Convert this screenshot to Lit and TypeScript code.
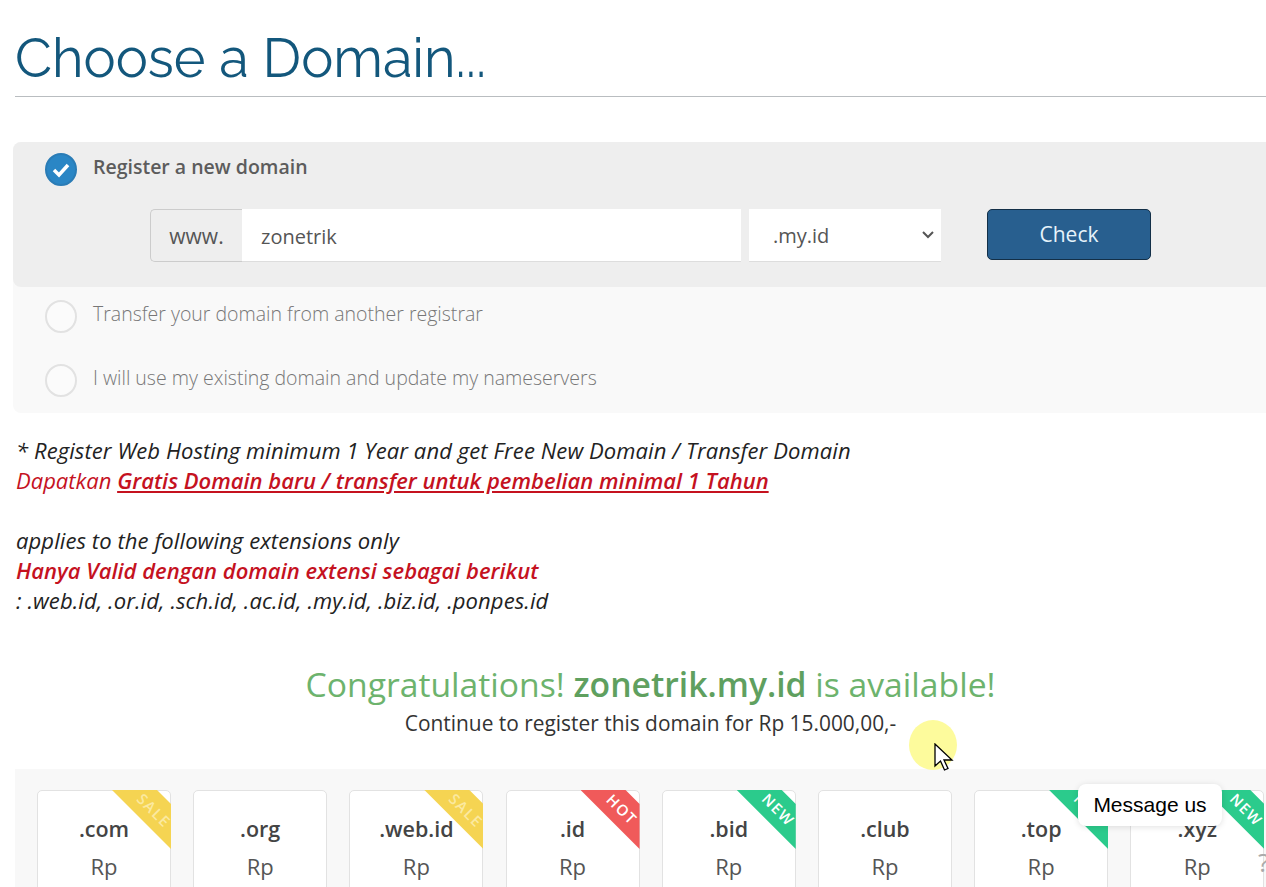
import { LitElement, html, css } from "lit";
import { customElement } from "lit/decorators.js";

type Tld = { name: string; tag?: "sale" | "hot" | "new" };
const TLDS: Tld[] = [
  { name: ".com", tag: "sale" },
  { name: ".org" },
  { name: ".web.id", tag: "sale" },
  { name: ".id", tag: "hot" },
  { name: ".bid", tag: "new" },
  { name: ".club" },
  { name: ".top", tag: "new" },
  { name: ".xyz", tag: "new" },
];

@customElement("app-root")
export class AppRoot extends LitElement {
  static styles = css`
    :host {
      display: block;
      width: 1266px;
      height: 887px;
      overflow: hidden;
      position: relative;
      background: #fff;
      font-family: "Open Sans", sans-serif;
      color: #333;
    }
    .page { padding-left: 15px; }
    h1 {
      margin: 0;
      height: 97px;
      box-sizing: border-box;
      padding-top: 25px;
      border-bottom: 1px solid #b9bdc0;
      font: 400 54px/66px Raleway, "Open Sans", sans-serif;
      color: #13577c;
    }
    .options {
      margin: 45px 0 0 -2px;
      padding-left: 2px;
      height: 271px;
      background: #f9f9f9;
      border-radius: 8px 0 0 8px;
    }
    .sel {
      margin-left: -2px;
      padding-left: 2px;
      height: 145px;
      background: #eee;
      border-radius: 8px 0 0 8px;
      box-sizing: border-box;
      padding-top: 11px;
    }
    .opt { display: flex; align-items: flex-start; padding-left: 30px; gap: 16px; }
    .radio {
      width: 32px; height: 33px; border-radius: 50%;
      box-sizing: border-box; flex: none;
      border: 2px solid #e2e2e2; background: #fbfbfb;
      display: flex; align-items: center; justify-content: center;
    }
    .radio.on { background: #2a86c5; border-color: #2a7cb6; }
    .label { font-size: 19.5px; line-height: 26px; color: #777; font-weight: 300; }
    .sel .label { color: #5c5c5c; font-weight: 600; margin-top: 1px; }
    .form { display: flex; margin-top: 23px; padding-left: 135px; align-items: flex-start; }
    .www {
      width: 92px; height: 53px; box-sizing: border-box;
      background: #eee; border: 1px solid #ccc; border-right: 0;
      border-radius: 5px 0 0 5px;
      font-size: 21px; line-height: 53px; text-align: center; color: #555;
    }
    .input {
      width: 499px; height: 53px; box-sizing: border-box;
      background: #fff; border-bottom: 1px solid #ddd;
      font-size: 20px; line-height: 55px; padding-left: 19px; color: #555;
    }
    .select {
      width: 192px; height: 53px; margin-left: 8px; box-sizing: border-box;
      background: #fff; border-bottom: 1px solid #ddd;
      font-size: 20px; line-height: 55px; padding-left: 24px; color: #555;
      display: flex; justify-content: space-between; align-items: center;
    }
    .select svg { margin-right: 6px; }
    .btn {
      margin-left: 46px; width: 164px; height: 51px; box-sizing: border-box;
      background: #285f8f; border: 1px solid #132f47; border-radius: 5px;
      color: #e6f3fb; font-size: 21px; line-height: 49px; text-align: center;
    }
    .rest { padding-top: 13px; }
    .rest .opt { height: 64px; }
    .rest .label { margin-top: 1px; }
    .note {
      margin-top: 22px; font-style: italic; font-size: 22px; line-height: 30px;
      color: #222; white-space: nowrap; padding-left: 1px; letter-spacing: 0.09px;
    }
    .red { color: #c5121f; letter-spacing: 0; }
    .strong { font-weight: 600; }
    u { font-weight: 600; }
    .blank { height: 30px; }
    .congr { margin-top: 47px; text-align: center; padding-left: 20px; }
    .congr h2 {
      margin: 0; font-weight: 400; font-size: 33.7px; line-height: 44px; color: #6db36d;
    }
    .congr h2 b { font-weight: 600; color: #5fa05f; }
    .congr p { margin: 0; font-size: 20.9px; line-height: 34px; color: #333; }
    .tlds {
      margin-top: 29px; height: 200px; background: #f8f8f8;
      display: flex; gap: 22.2px; padding: 21px 0 0 22px; overflow: hidden;
    }
    .card {
      position: relative; flex: none; width: 134px; height: 160px;
      box-sizing: border-box; background: #fff;
      border: 1px solid #e2e2e2; border-radius: 5px;
      text-align: center;
    }
    .card .n { margin-top: 22px; font-size: 21.5px; font-weight: 550; line-height: 32px; color: #444; }
    .card .p { margin-top: 6px; font-size: 22px; line-height: 30px; color: #555; }
    .rib {
      position: absolute; top: -1px; right: -1px; width: 59px; height: 59px;
      clip-path: polygon(0 0, 45px 0, 100% 14px, 100% 100%);
    }
    .rib span {
      position: absolute; left: 22px; top: 5px; width: 38px; height: 29px;
      transform: rotate(45deg); text-align: center;
      font-size: 15px; line-height: 29px; letter-spacing: 1.500px;
      color: #fff; font-weight: 600; white-space: nowrap;
    }
    .sale { background: #f5d452; }
    .sale span { color: #fbe9a0; }
    .hot { background: #f05a5a; }
    .new { background: #2bcb8c; }
    .halo {
      position: absolute; left: 909px; top: 720px; width: 48px; height: 50px;
      border-radius: 50%; background: #fdfb9c;
    }
    .cursor { position: absolute; left: 934px; top: 743px; }
    .msg {
      position: absolute; left: 1078px; top: 784px; width: 144px; height: 42px;
      background: #fff; border-radius: 8px;
      box-shadow: 0 1px 6px rgba(0,0,0,.12);
      font: 400 21px/42px "Liberation Sans", sans-serif; color: #000; text-align: center;
    }
    .q {
      position: absolute; left: 1258px; top: 846px;
      font: 400 26px/32px "Open Sans", sans-serif; color: #aaa;
    }
  `;

  render() {
    return html`
      <div class="page">
        <h1>Choose a Domain...</h1>
        <div class="options">
          <div class="sel">
            <div class="opt">
              <div class="radio on">
                <svg width="22" height="18" viewBox="0 0 22 18"><path d="M4 9l5 5 9-10" fill="none" stroke="#fff" stroke-width="3.500"/></svg>
              </div>
              <div class="label">Register a new domain</div>
            </div>
            <div class="form">
              <div class="www">www.</div>
              <div class="input">zonetrik</div>
              <div class="select">.my.id
                <svg width="14" height="10" viewBox="0 0 14 10"><path d="M2 2l5 5 5-5" fill="none" stroke="#555" stroke-width="2"/></svg>
              </div>
              <div class="btn">Check</div>
            </div>
          </div>
          <div class="rest">
            <div class="opt"><div class="radio"></div><div class="label">Transfer your domain from another registrar</div></div>
            <div class="opt"><div class="radio"></div><div class="label">I will use my existing domain and update my nameservers</div></div>
          </div>
        </div>
        <div class="note">
          <div>* Register Web Hosting minimum 1 Year and get Free New Domain / Transfer Domain</div>
          <div class="red">Dapatkan <u>Gratis Domain baru / transfer untuk pembelian minimal 1 Tahun</u></div>
          <div class="blank"></div>
          <div>applies to the following extensions only</div>
          <div class="red strong">Hanya Valid dengan domain extensi sebagai berikut</div>
          <div>: .web.id, .or.id, .sch.id, .ac.id, .my.id, .biz.id, .ponpes.id</div>
        </div>
        <div class="congr">
          <h2>Congratulations! <b>zonetrik.my.id</b> is available!</h2>
          <p>Continue to register this domain for Rp 15.000,00,-</p>
        </div>
        <div class="tlds">
          ${TLDS.map(
            (t) => html`<div class="card">
              <div class="n">${t.name}</div>
              <div class="p">Rp</div>
              ${t.tag ? html`<div class="rib ${t.tag}"><span>${t.tag.toUpperCase()}</span></div>` : ""}
            </div>`
          )}
        </div>
      </div>
      <div class="halo"></div>
      <svg class="cursor" width="20" height="30" viewBox="0 0 20 30">
        <path d="M1 1v22l5.500-5 4 9 3.500-1.500-4-8.500h8z" fill="#fff" stroke="#000" stroke-width="1.300"/>
      </svg>
      <div class="msg">Message us</div>
      <div class="q">?</div>
    `;
  }
}
